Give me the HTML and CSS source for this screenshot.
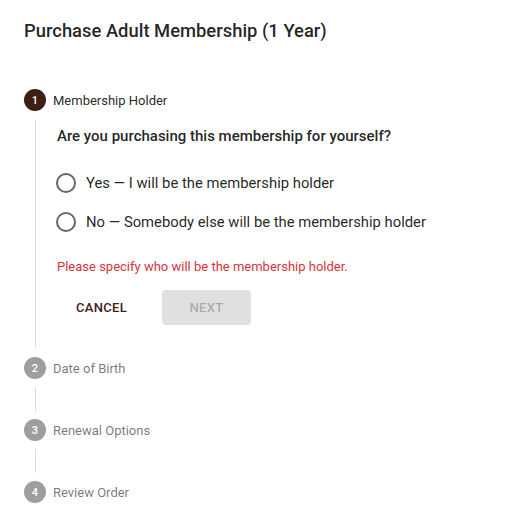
FILE: index.html
```html
<!DOCTYPE html>
<html lang="en">
<head>
<meta charset="utf-8">
<title>Purchase Adult Membership</title>
<link rel="stylesheet" href="styles.css">
</head>
<body>
<div class="dialog">
  <h2 class="title">Purchase Adult Membership (1 Year)</h2>
  <div class="stepper">
    <div class="step">
      <div class="step-header">
        <span class="step-icon active">1</span>
        <span class="step-label active">Membership Holder</span>
      </div>
      <div class="step-content">
        <p class="question">Are you purchasing this membership for yourself?</p>
        <div class="radio-group">
          <label class="radio"><span class="radio-circle"></span><span class="radio-text">Yes — I will be the membership holder</span></label>
          <label class="radio"><span class="radio-circle"></span><span class="radio-text">No — Somebody else will be the membership holder</span></label>
        </div>
        <p class="error">Please specify who will be the membership holder.</p>
        <div class="actions">
          <button class="btn btn-text">CANCEL</button>
          <button class="btn btn-disabled" disabled>NEXT</button>
        </div>
      </div>
    </div>
    <div class="step">
      <div class="step-header">
        <span class="step-icon">2</span>
        <span class="step-label">Date of Birth</span>
      </div>
      <div class="step-connector"></div>
    </div>
    <div class="step">
      <div class="step-header">
        <span class="step-icon">3</span>
        <span class="step-label">Renewal Options</span>
      </div>
      <div class="step-connector"></div>
    </div>
    <div class="step">
      <div class="step-header">
        <span class="step-icon">4</span>
        <span class="step-label">Review Order</span>
      </div>
    </div>
  </div>
</div>
</body>
</html>
```
FILE: styles.css
```css
* { box-sizing: border-box; }
html, body {
  margin: 0;
  padding: 0;
  background: #fff;
}
body {
  font-family: Roboto, "Liberation Sans", Arial, sans-serif;
  color: rgba(0,0,0,.87);
}
.dialog {
  padding: 15px 24px 0 24px;
}
.title {
  margin: 0;
  font-size: 18.4px;
  font-weight: 500;
  line-height: 32px;
  color: rgba(0,0,0,.87);
}
.stepper {
  margin-top: 42px;
  display: flex;
  flex-direction: column;
}
.step-header {
  display: flex;
  align-items: center;
  height: 22px;
}
.step-icon {
  width: 22px;
  height: 22px;
  border-radius: 50%;
  background: #9e9e9e;
  color: #fff;
  font-size: 11px;
  font-weight: 500;
  display: flex;
  align-items: center;
  justify-content: center;
  flex: none;
}
.step-icon.active {
  background: #3d1d14;
}
.step-label {
  margin-left: 7px;
  font-size: 13px;
  color: rgba(0,0,0,.54);
}
.step-label.active {
  color: rgba(0,0,0,.87);
}
.step-content {
  margin: 8px 0 9px 11px;
  border-left: 1px solid rgba(0,0,0,.14);
  padding: 7px 0 23px 21px;
}
.step-connector {
  margin: 8px 0 8px 11px;
  height: 24px;
  border-left: 1px solid rgba(0,0,0,.14);
}
.question {
  margin: 0;
  font-size: 15px;
  font-weight: 500;
  line-height: 20px;
}
.radio-group {
  margin-top: 27px;
  display: flex;
  flex-direction: column;
  gap: 19px;
}
.radio {
  display: flex;
  align-items: center;
  height: 20px;
  font-size: 14.8px;
  color: rgba(0,0,0,.87);
}
.radio-circle {
  width: 20px;
  height: 20px;
  border: 2px solid rgba(0,0,0,.6);
  border-radius: 50%;
  margin-left: -1px;
  flex: none;
}
.radio-text {
  margin-left: 10px;
}
.error {
  margin: 27px 0 0 0;
  font-size: 13px;
  line-height: 16px;
  color: #d8343d;
}
.actions {
  margin-top: 15px;
  display: flex;
  gap: 16px;
}
.btn {
  width: 89px;
  height: 35px;
  border: 0;
  border-radius: 4px;
  font-family: Roboto, "Liberation Sans", Arial, sans-serif;
  font-size: 13px;
  font-weight: 500;
  letter-spacing: .3px;
  padding: 0;
}
.btn-text {
  background: transparent;
  color: #3e2118;
}
.btn-disabled {
  background: #e0e0e0;
  color: rgba(0,0,0,.26);
}
```
